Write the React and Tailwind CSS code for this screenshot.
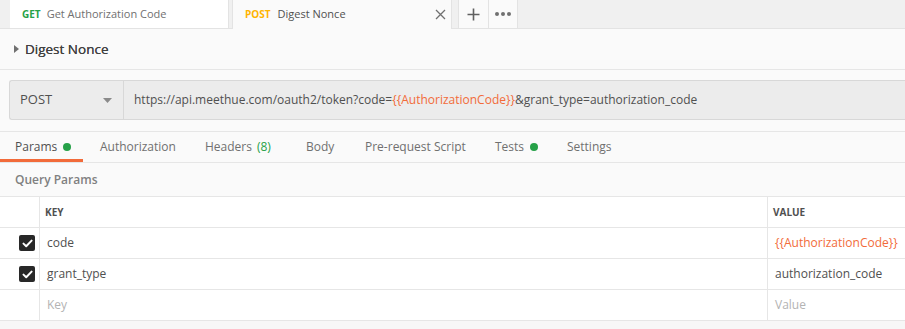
import React from "react";

const font = { fontFamily: '"Open Sans", "Noto Sans", sans-serif' };

function Check() {
  return (
    <div className="w-[16px] h-[16px] rounded-[2px] bg-[#282828] flex items-center justify-center">
      <svg width="11" height="9" viewBox="0 0 11 9">
        <path d="M1.5 4.6 L4.2 7.2 L9.6 1.6" fill="none" stroke="#fff" strokeWidth="2" strokeLinecap="round" strokeLinejoin="round" />
      </svg>
    </div>
  );
}

function Row({ checked, k, v, placeholder, vOrange }) {
  return (
    <div className="flex h-[31px] border-b border-[#e6e6e6] bg-white text-[12px]">
      <div className="w-[40px] border-r border-[#e6e6e6] flex items-center justify-end pr-[4px]">
        {checked && <Check />}
      </div>
      <div className={`w-[728px] border-r border-[#e6e6e6] flex items-center pl-[7px] ${placeholder ? "text-[#b3b3b3]" : "text-[#505050]"}`}>{k}</div>
      <div className={`flex-1 flex items-center pl-[7px] ${placeholder ? "text-[#b3b3b3]" : vOrange ? "text-[#f26b3a]" : "text-[#505050]"}`}>{v}</div>
    </div>
  );
}

export default function App() {
  const tabs = [
    { t: "Params", dot: true, active: true, w: 83 },
    { t: "Authorization", w: 103 },
    { t: "Headers", extra: "(8)", w: 99 },
    { t: "Body", w: 57 },
    { t: "Pre-request Script", w: 128 },
    { t: "Tests", dot: true, w: 70 },
    { t: "Settings", w: 80 },
  ];
  return (
    <div style={font} className="w-[905px] h-[329px] overflow-hidden bg-[#f7f7f7] text-[#505050]">
      {/* Tab bar */}
      <div className="flex h-[29px] bg-[#f0f0f0] border-b border-[#e3e3e3] pl-[10px]">
        <div className="w-[219px] h-[28px] bg-white border-r border-[#e3e3e3] flex items-center pl-[12px] text-[11px]">
          <span className="text-[10px] font-bold text-[#26a148] mr-[6px]">GET</span>
          <span className="text-[#707070]">Get Authorization Code</span>
        </div>
        <div className="ml-[3px] w-[220px] h-[29px] -mb-px relative bg-[#fafafa] border-l border-r border-[#e3e3e3] flex items-center pl-[12px] pr-[5px] text-[11px]">
          <span className="text-[10px] font-bold text-[#ffb400] mr-[7px]">POST</span>
          <span className="text-[#505050] flex-1">Digest Nonce</span>
          <svg width="11" height="11" viewBox="0 0 11 11">
            <path d="M1 1 L10 10 M10 1 L1 10" stroke="#707070" strokeWidth="1.3" />
          </svg>
        </div>
        <div className="ml-[6px] w-[31px] h-[28px] bg-[#fafafa] border-l border-r border-[#e3e3e3] flex items-center justify-center">
          <svg width="13" height="13" viewBox="0 0 13 13">
            <path d="M6.5 0.5 V12.5 M0.5 6.5 H12.5" stroke="#606060" strokeWidth="1.6" />
          </svg>
        </div>
        <div className="w-[29px] h-[28px] bg-[#fafafa] border-r border-[#e3e3e3] flex items-center justify-center gap-[2px]">
          <span className="w-[4px] h-[4px] rounded-full bg-[#707070]" />
          <span className="w-[4px] h-[4px] rounded-full bg-[#707070]" />
          <span className="w-[4px] h-[4px] rounded-full bg-[#707070]" />
        </div>
      </div>

      {/* Request name */}
      <div className="h-[41px] bg-[#fafafa] border-b border-[#e6e6e6] flex items-center pl-[14px]">
        <svg width="5" height="8" viewBox="0 0 5 8" className="mr-[6px]">
          <path d="M0 0 L5 4 L0 8 Z" fill="#707070" />
        </svg>
        <span className="text-[13.5px] text-[#404040] [text-shadow:0_0_0.4px_#404040]">Digest Nonce</span>
      </div>

      {/* URL bar */}
      <div className="bg-[#fafafa] pt-[10px] pb-[11px] pl-[9px]">
        <div className="flex h-[40px] bg-[#ececec] border border-r-0 border-[#d8d8d8] rounded-l-[3px]">
          <div className="w-[114px] border-r border-[#d8d8d8] flex items-center pl-[10px] pr-[11px] text-[13px]">
            <span className="flex-1 text-[#505050]">POST</span>
            <svg width="9" height="5" viewBox="0 0 9 5">
              <path d="M0 0 H9 L4.5 5 Z" fill="#8a8a8a" />
            </svg>
          </div>
          <div className="flex items-center pl-[10px] text-[12px] text-[#505050] whitespace-nowrap">
            https://api.meethue.com/oauth2/token?code=<span className="text-[#f26b3a]">{"{{AuthorizationCode}}"}</span>&amp;grant_type=authorization_code
          </div>
        </div>
      </div>

      {/* Request tabs */}
      <div className="flex h-[32px] bg-[#fafafa] border-t border-b border-[#e6e6e6]">
        {tabs.map((tab) => (
          <div
            key={tab.t}
            style={{ width: tab.w }}
            className={`mr-[2px] flex items-center pl-[15px] pt-[2px] text-[12px] border-b-[3px] ${tab.active ? "border-[#f26b3a] text-[#505050]" : "border-transparent text-[#707070]"}`}
          >
            <span>{tab.t}</span>
            {tab.extra && <span className="ml-[5px] text-[#26a148]">{tab.extra}</span>}
            {tab.dot && <span className="ml-[6px] w-[8px] h-[8px] rounded-full bg-[#26a148]" />}
          </div>
        ))}
      </div>

      {/* Query Params */}
      <div className="h-[33px] bg-[#fafafa] flex items-center pl-[15px] text-[12px] font-semibold text-[#808080]">
        Query Params
      </div>

      {/* Table */}
      <div className="border-t border-[#e6e6e6]">
        <div className="flex h-[31px] border-b border-[#e6e6e6] bg-white text-[10px] font-bold text-[#505050]">
          <div className="w-[40px] border-r border-[#e6e6e6]" />
          <div className="w-[728px] border-r border-[#e6e6e6] flex items-center pl-[5px]">KEY</div>
          <div className="flex-1 flex items-center pl-[5px]">VALUE</div>
        </div>
        <Row checked k="code" v="{{AuthorizationCode}}" vOrange />
        <Row checked k="grant_type" v="authorization_code" />
        <Row placeholder k="Key" v="Value" />
      </div>
    </div>
  );
}
